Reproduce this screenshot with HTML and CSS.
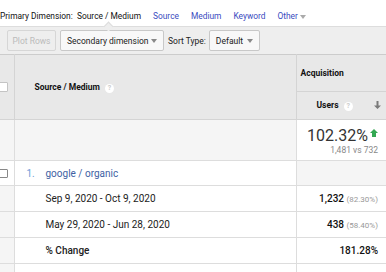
FILE: index.html
```html
<!DOCTYPE html>
<html lang="en">
<head>
  <meta charset="UTF-8" />
  <title>Source / Medium report</title>
  <link rel="stylesheet" href="styles.css">
</head>
<body>
  <div class="dimbar">
    <span class="dim-label">Primary Dimension:</span>
    <span class="dim-active">Source / Medium</span>
    <a class="dim-link">Source</a>
    <a class="dim-link">Medium</a>
    <a class="dim-link">Keyword</a>
    <a class="dim-link">Other<span class="caret"></span></a>
  </div>

  <div class="toolbar">
    <button class="btn disabled">Plot Rows</button>
    <button class="btn select wide">Secondary dimension <span class="caret"></span></button>
    <span class="sort-label">Sort Type:</span>
    <button class="btn select">Default <span class="caret"></span></button>
  </div>

  <table class="report">
    <colgroup>
      <col class="c-check">
      <col class="c-dim">
      <col class="c-metric">
    </colgroup>
    <thead>
      <tr class="h-group">
        <th rowspan="2" class="check-cell"><span class="checkbox"></span></th>
        <th rowspan="2" class="dim-head">Source / Medium <span class="help">?</span></th>
        <th class="metric-group">Acquisition</th>
      </tr>
      <tr class="h-metric">
        <th class="metric-head">Users <span class="help">?</span>
          <svg class="sort-arrow" width="7" height="8" viewBox="0 0 7 8"><path d="M2.5 0h2v4.5h2.5L3.5 8 0 4.5h2.5z" fill="#7a7a7a"/></svg>
        </th>
      </tr>
    </thead>
    <tbody>
      <tr class="summary">
        <td class="check-cell"></td>
        <td></td>
        <td class="num">
          <div class="big">102.32%<svg class="up" width="8" height="8" viewBox="0 0 8 8"><path d="M4 0 8 4H6v4H2V4H0z" fill="#34a853"/></svg></div>
          <div class="vs">1,481 vs 732</div>
        </td>
      </tr>
      <tr class="entry">
        <td class="check-cell plain"><span class="checkbox"></span></td>
        <td><span class="idx">1.</span><a class="entry-link">google / organic</a></td>
        <td class="gray"></td>
      </tr>
      <tr class="sub">
        <td class="check-cell"></td>
        <td class="range">Sep 9, 2020 - Oct 9, 2020</td>
        <td class="num"><b>1,232</b> <span class="pct">(82.30%)</span></td>
      </tr>
      <tr class="sub">
        <td class="check-cell"></td>
        <td class="range">May 29, 2020 - Jun 28, 2020</td>
        <td class="num"><b>438</b> <span class="pct">(58.40%)</span></td>
      </tr>
      <tr class="sub">
        <td class="check-cell"></td>
        <td class="range strong">% Change</td>
        <td class="num"><b>181.28%</b></td>
      </tr>
      <tr class="sub">
        <td class="check-cell"></td>
        <td></td>
        <td></td>
      </tr>
    </tbody>
  </table>
</body>
</html>
```

FILE: styles.css
```css
body {
  margin: 0;
  font-family: Roboto, "Liberation Sans", Arial, sans-serif;
  font-size: 10px;
  color: #222;
  background: #fff;
  overflow: hidden;
}
.dimbar {
  height: 26px;
  box-sizing: border-box;
  padding-top: 11px;
  font-size: 8.4px;
  line-height: 10px;
  white-space: nowrap;
  display: flex;
}
.dim-label {
  width: 77px;
  color: #111;
}
.dim-active {
  color: #111;
  width: 76px;
  position: relative;
}
.dim-active::after {
  content: "";
  position: absolute;
  left: 28px;
  top: 12px;
  width: 6px;
  height: 6px;
  background: #eee;
  border-left: 1px solid #ddd;
  border-top: 1px solid #ddd;
  transform: rotate(45deg);
  z-index: 2;
}
.dim-link {
  color: #3b4cc0;
  margin-right: 12px;
}
.caret {
  display: inline-block;
  width: 0;
  height: 0;
  border-left: 3px solid transparent;
  border-right: 3px solid transparent;
  border-top: 4px solid #aaa;
  vertical-align: middle;
  margin-left: 2px;
}
.toolbar {
  height: 28px;
  box-sizing: border-box;
  background: #eee;
  border-top: 1px solid #ddd;
  display: flex;
  align-items: center;
  padding: 0 0 0 7px;
  white-space: nowrap;
}
.btn {
  height: 21px;
  font-family: inherit;
  font-size: 8.5px;
  padding: 0 6px;
  border: 1px solid #c8c8c8;
  border-radius: 2px;
  background: #f8f8f8;
  color: #222;
  display: flex;
  align-items: center;
  justify-content: space-between;
  white-space: nowrap;
  flex-shrink: 0;
  width: 51px;
}
.btn.wide { width: 104px; }
.btn .caret { border-top-color: #888; }
.btn.disabled {
  color: #bbb;
  background: #eee;
  border-color: #d6d6d6;
  width: 49px;
  margin-right: 4px;
  justify-content: center;
  padding: 0;
}
.sort-label {
  font-size: 8.5px;
  margin: 0 3px 0 4px;
  color: #222;
}
.report {
  border-collapse: collapse;
  table-layout: fixed;
  width: 386px;
}
.c-check { width: 14px; }
.c-metric { width: 90px; }
.report th, .report td {
  border: 1px solid #ddd;
  padding: 0;
  overflow: hidden;
  white-space: nowrap;
}
.report tr > :first-child { border-left: 0; }
.report tr > :last-child { border-right: 0; }
.report thead th {
  background: #e8e8e8;
  font-size: 8.5px;
  font-weight: 700;
  text-align: left;
  color: #111;
  border-color: #d4d4d4;
}
.report thead tr.h-group th { border-top: 1px solid #ccc; }
.h-group { height: 37px; }
.h-metric { height: 28px; }
.check-cell {
  background: #f5f5f5;
}
.checkbox {
  display: block;
  width: 9px;
  height: 9px;
  box-sizing: border-box;
  border: 1px solid #888;
  border-radius: 1px;
  background: #fff;
  margin-left: -1px;
}
thead .checkbox {
  border-color: #c4c4c4;
  width: 10px;
  height: 10px;
  margin-left: -2px;
}
.dim-head {
  padding-left: 20px !important;
}
.metric-group {
  padding-left: 4px !important;
}
.metric-head {
  padding-left: 20px !important;
  position: relative;
}
.help {
  display: inline-block;
  width: 9px;
  height: 9px;
  border-radius: 50%;
  background: #fff;
  color: #ccc;
  font-size: 7px;
  line-height: 9px;
  text-align: center;
  font-weight: 700;
  margin-left: 3px;
}
.sort-arrow {
  position: absolute;
  right: 5px;
  top: 9px;
}
.summary { height: 41px; }
.summary td { background: #f5f5f5; }
.summary td.num { background: #fff; }
.num {
  text-align: right;
  padding-right: 8px !important;
}
.big {
  font-size: 16px;
  color: #333;
  line-height: 18px;
  padding-top: 2px;
}
.up {
  margin-left: 2px;
  vertical-align: 4px;
}
.vs {
  font-size: 8.5px;
  color: #888;
  line-height: 10px;
}
.entry { height: 25px; }
.check-cell.plain { background: #fff; }
.idx {
  color: #6a9ad6;
  display: inline-block;
  width: 19px;
  padding-left: 12px;
}
.entry-link { color: #3e5fa3; }
.gray { background: #f5f5f5; }
.sub { height: 26px; }
.range {
  padding-left: 31px !important;
  color: #222;
}
.strong { font-weight: 500; }
.num b {
  font-weight: 500;
  color: #111;
}
.pct {
  color: #999;
  font-size: 8px;
}
```
